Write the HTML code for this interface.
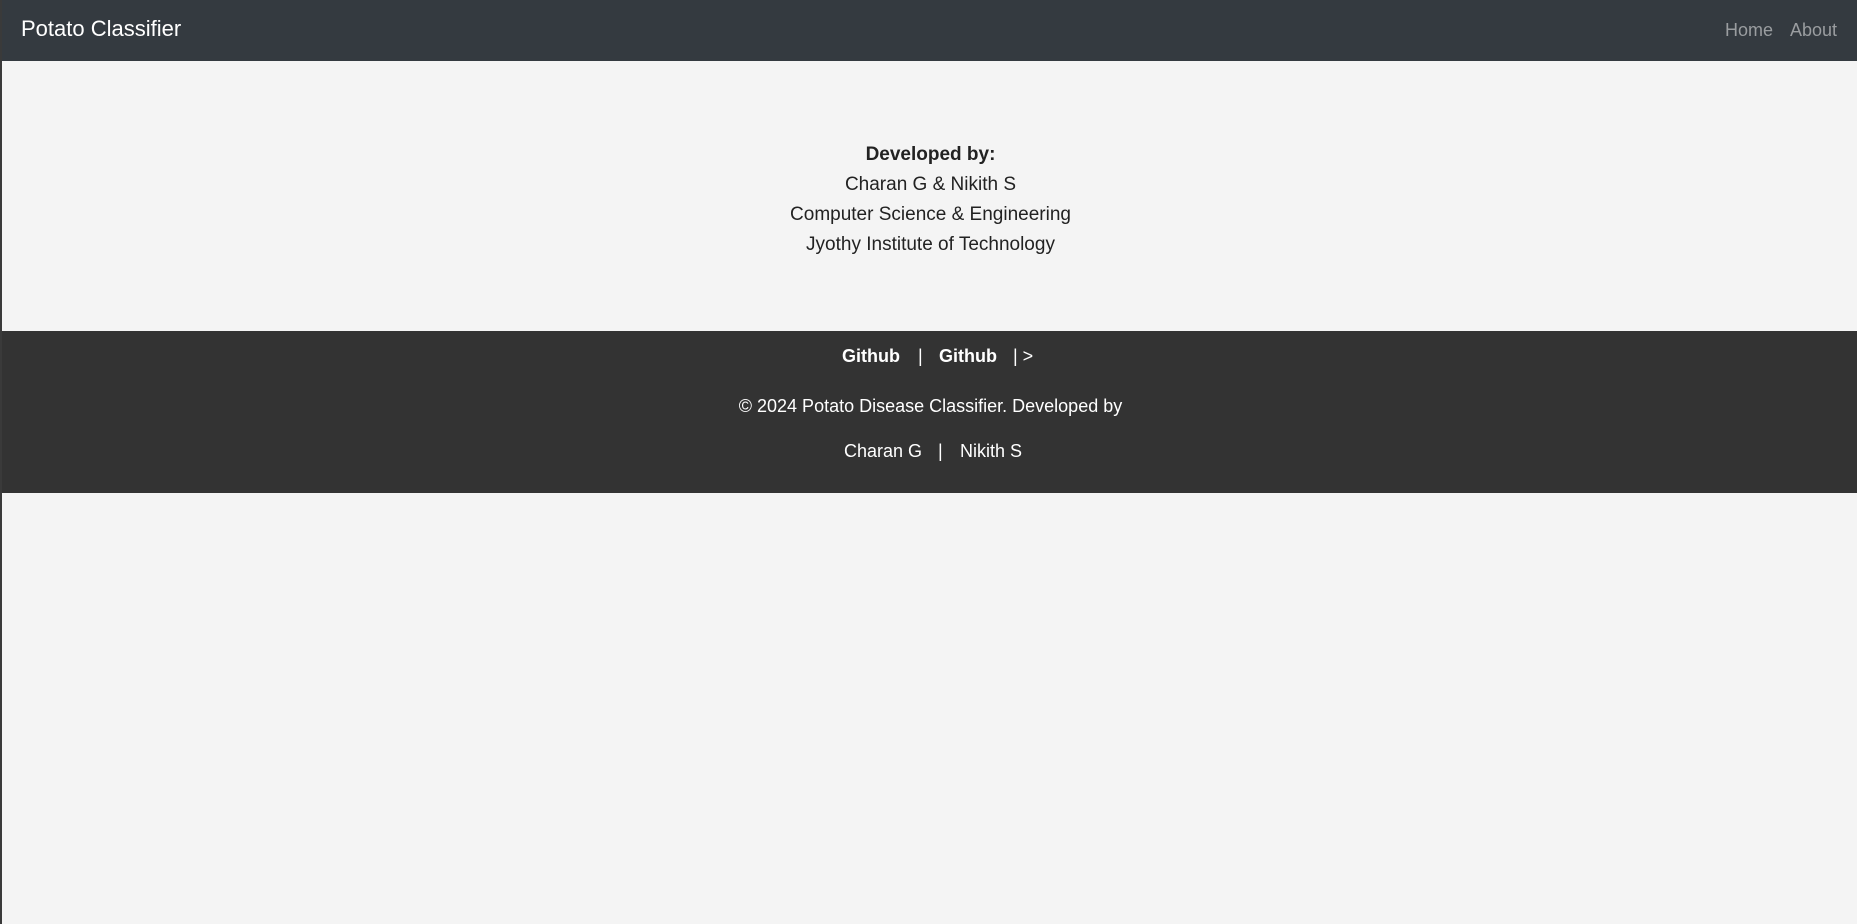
<!DOCTYPE html>
<html><head><meta charset="utf-8"><style>
*{margin:0;padding:0;box-sizing:border-box}
html,body{width:1857px;height:924px;overflow:hidden}
body{background:#f4f4f4;font-family:"Liberation Sans",Arial,sans-serif;position:relative;border-left:2px solid #3a3a3a}
.nav{position:absolute;left:0;top:0;width:1857px;height:61px;background:#343a40}
.brand{position:absolute;left:19px;top:16px;font-size:22px;color:#fff;line-height:26px}
.nl{position:absolute;top:19px;font-size:18px;color:#9a9da0;line-height:22px}
.main{position:absolute;left:0;width:1857px;top:140px;text-align:center;color:#222;font-size:19px;line-height:30px}
.foot{position:absolute;left:0;top:331px;width:1857px;height:162px;background:#333;color:#fff;font-size:18px}
.l{position:absolute;left:0;width:1857px;text-align:center;white-space:pre;line-height:20px}
.a{position:absolute;white-space:pre;line-height:20px}
</style></head><body>
<div class="nav"><div class="brand">Potato Classifier</div>
<div class="nl" style="left:1723px">Home</div><div class="nl" style="left:1788px">About</div></div>
<div class="main"><b>Developed by:</b><br>Charan G &amp; Nikith S<br>Computer Science &amp; Engineering<br>Jyothy Institute of Technology</div>
<div class="foot">
<div class="a" style="top:15px;left:840px"><b>Github</b></div>
<div class="a" style="top:15px;left:916px">|</div>
<div class="a" style="top:15px;left:937px"><b>Github</b></div>
<div class="a" style="top:15px;left:1011px">| &gt;</div>
<div class="l" style="top:65px">© 2024 Potato Disease Classifier. Developed by</div>
<div class="a" style="top:110px;left:842px">Charan G</div>
<div class="a" style="top:110px;left:936px">|</div>
<div class="a" style="top:110px;left:958px">Nikith S</div>
</div>
</body></html>
